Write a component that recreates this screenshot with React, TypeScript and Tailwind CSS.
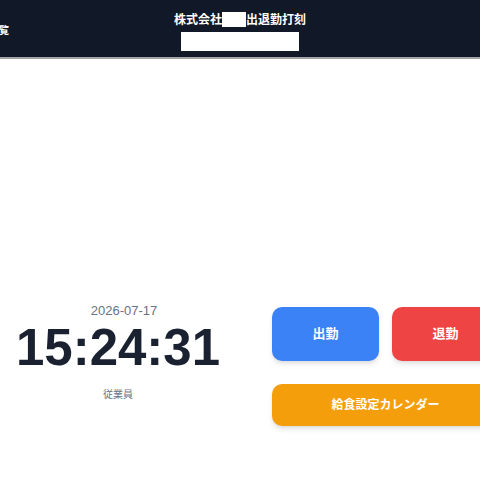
import React from 'react'

const font = { fontFamily: '"Liberation Sans", "Noto Sans CJK JP", sans-serif' }

export default function App() {
  return (
    <div className="w-[480px] h-[480px] overflow-hidden bg-white" style={font}>
      {/* Header */}
      <header className="bg-[#111827] h-[59px] border-b-2 border-[#a3a3a3] grid grid-cols-[1fr_auto_1fr] items-center">
        <div className="-ml-[11px] mt-[3px] text-[10px] font-bold text-white">一覧</div>
        <div className="flex flex-col items-center pt-[5px]">
          <div className="flex items-center text-[12px] font-bold text-white leading-[16px]">
            <span>株式会社</span>
            <span className="w-[24px] h-[15px] bg-white" />
            <span>出退勤打刻</span>
          </div>
          <div className="mt-[4px] w-[118px] h-[19px] bg-white" />
        </div>
        <div />
      </header>

      {/* Main */}
      <main className="flex items-start pt-[243px]">
        <div className="w-[236px] flex flex-col items-center shrink-0">
          <div className="ml-[12px] text-[13px] leading-[18px] text-gray-500">2026-07-17</div>
          <div className="mt-[2px] text-[51px] leading-none font-bold text-[#1a2231]">15:24:31</div>
          <div className="mt-[15px] text-[10px] leading-[14px] text-gray-500">従業員</div>
        </div>
        <div className="ml-[36px] mt-[5px] grid grid-cols-[107px_107px] gap-x-[13px] gap-y-[23px] shrink-0">
          <button className="h-[54px] rounded-[10px] bg-[#3b82f6] text-white text-[13px] font-bold shadow-md">
            出勤
          </button>
          <button className="h-[54px] rounded-[10px] bg-[#ef4444] text-white text-[13px] font-bold shadow-md">
            退勤
          </button>
          <button className="col-span-2 h-[42px] rounded-[10px] bg-[#f59e0b] text-white text-[12px] font-bold shadow-md">
            給食設定カレンダー
          </button>
        </div>
      </main>
    </div>
  )
}
